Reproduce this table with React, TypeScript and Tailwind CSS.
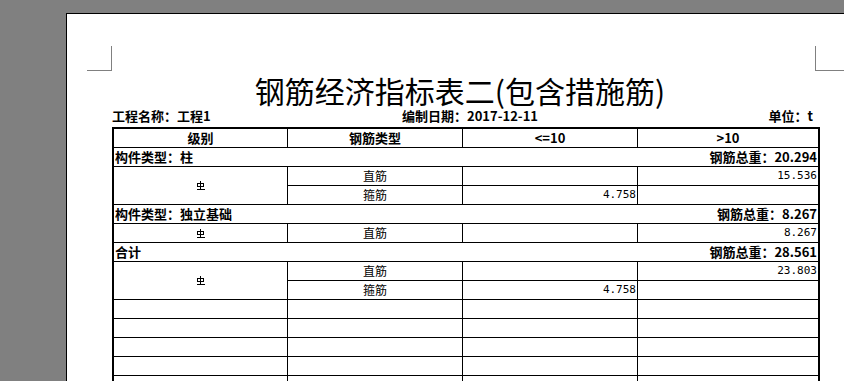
import React from "react";

const cjk = { fontFamily: '"Noto Sans CJK SC", "Liberation Sans", sans-serif' };
const mono = { fontFamily: '"DejaVu Sans Mono", "Liberation Mono", monospace' };

interface DetailRow {
  type: string;
  small: string;
  large: string;
}

interface Group {
  label: string;
  total: string;
  rows: DetailRow[];
}

const groups: Group[] = [
  {
    label: "构件类型：柱",
    total: "20.294",
    rows: [
      { type: "直筋", small: "", large: "15.536" },
      { type: "箍筋", small: "4.758", large: "" },
    ],
  },
  {
    label: "构件类型：独立基础",
    total: "8.267",
    rows: [{ type: "直筋", small: "", large: "8.267" }],
  },
  {
    label: "合计",
    total: "28.561",
    rows: [
      { type: "直筋", small: "", large: "23.803" },
      { type: "箍筋", small: "4.758", large: "" },
    ],
  },
];

// grade II rebar mark
const RebarMark = () => (
  <svg width="9" height="9" viewBox="0 0 9 9" className="block" shapeRendering="crispEdges">
    <path d="M1.5 2.5h6v3h-6z" fill="none" stroke="#000" strokeWidth="1" />
    <path d="M4.5 0v8.5M0.5 8.5h8" fill="none" stroke="#000" strokeWidth="1" />
  </svg>
);

const GroupBlock = ({ group }: { group: Group }) => (
  <>
    <div className="flex h-[19px] items-center justify-between border-b border-black px-[1px] text-[13px] font-bold leading-[18px]" style={cjk}>
      <span>{group.label}</span>
      <span>钢筋总重：{group.total}</span>
    </div>
    <div className="flex border-b border-black">
      <div className="flex w-[174px] items-center justify-center border-r border-black">
        <RebarMark />
      </div>
      <div className="flex flex-col">
        {group.rows.map((r, i) => (
          <div
            key={i}
            className={`flex h-[18px] text-[12px] leading-[18px] ${i < group.rows.length - 1 ? "box-content border-b border-black" : ""}`}
          >
            <div className="w-[175px] border-r border-black text-center" style={cjk}>{r.type}</div>
            <div className="w-[175px] border-r border-black pr-[1px] text-right text-[11px]" style={mono}>{r.small}</div>
            <div className="w-[180px] pr-[1px] text-right text-[11px]" style={mono}>{r.large}</div>
          </div>
        ))}
      </div>
    </div>
  </>
);

const EmptyRow = () => (
  <div className="flex h-[19px] border-b border-black">
    <div className="w-[174px] border-r border-black" />
    <div className="w-[175px] border-r border-black" />
    <div className="w-[175px] border-r border-black" />
    <div className="w-[180px]" />
  </div>
);

export default function App() {
  return (
    <div className="h-[381px] w-[844px] overflow-hidden bg-[#808080] pl-[66px] pt-[13px]">
      <div className="relative min-h-[400px] border-l border-t border-black bg-white pl-[45px] pr-[24px] pt-[60px] text-black">
        {/* crop marks */}
        <div className="absolute left-[20px] top-[32px] h-[25px] w-[25px] border-b border-r border-[#808080]" />
        <div className="absolute left-[748px] top-[32px] h-[25px] w-[40px] border-b border-l border-[#808080]" />

        <div className="mb-[2px] pr-[12px] text-center text-[30px] leading-[32px]" style={cjk}>
          钢筋经济指标表二(包含措施筋)
        </div>

        <div className="mb-[3px] flex h-[16px] items-center text-[13px] font-bold leading-[16px]" style={cjk}>
          <span className="w-[290px]">工程名称：工程1</span>
          <span>编制日期：2017-12-11</span>
          <span className="ml-auto pr-[7px]">单位：t</span>
        </div>

        <div className="w-[708px] border-x-2 border-t-2 border-black">
          <div className="flex h-[19px] border-b border-black text-[13px] font-bold leading-[18px]" style={cjk}>
            <div className="w-[174px] border-r border-black text-center">级别</div>
            <div className="w-[175px] border-r border-black text-center">钢筋类型</div>
            <div className="w-[175px] border-r border-black text-center">&lt;=10</div>
            <div className="w-[180px] text-center">&gt;10</div>
          </div>
          {groups.map((g) => (
            <GroupBlock key={g.label} group={g} />
          ))}
          {Array.from({ length: 6 }).map((_, i) => (
            <EmptyRow key={i} />
          ))}
        </div>
      </div>
    </div>
  );
}
